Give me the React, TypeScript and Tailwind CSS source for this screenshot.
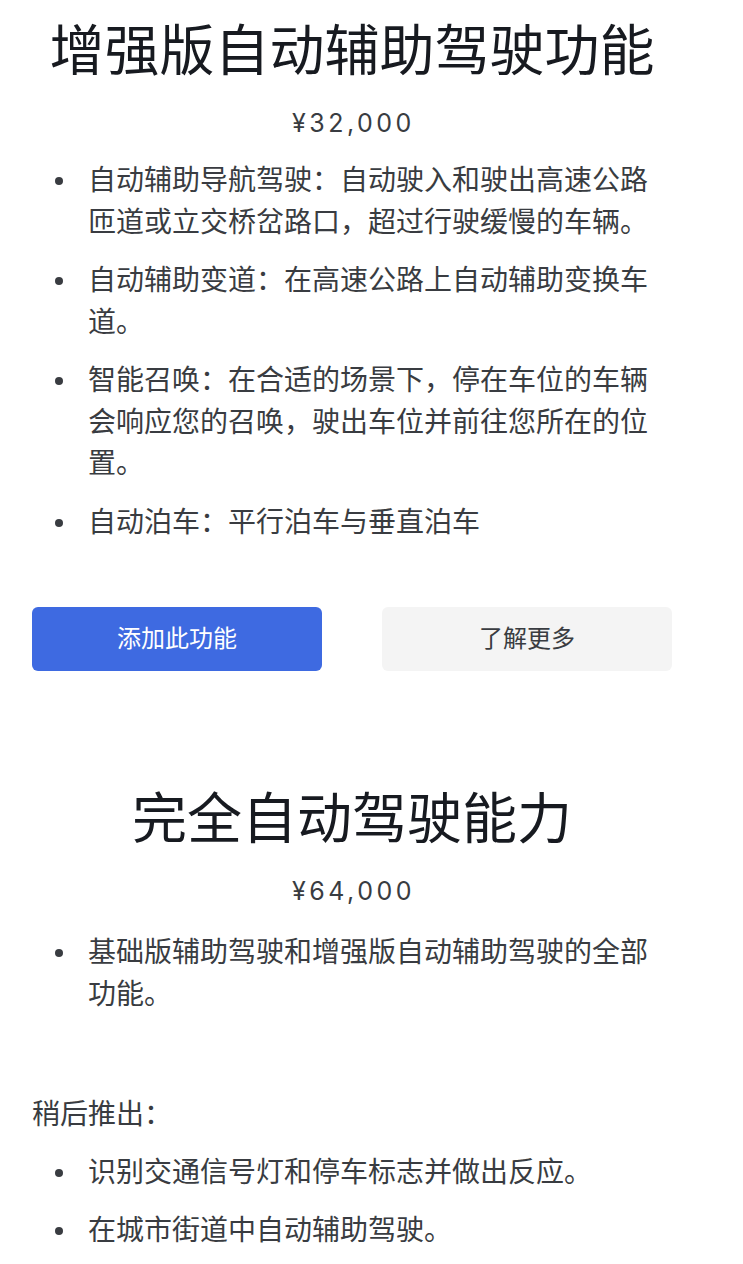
// Autopilot upgrade cards: enhanced autopilot and full self-driving
import React from 'react';

const FONT = { fontFamily: '"Inter", "Noto Sans CJK SC", sans-serif' };

interface Upgrade {
	title: string;
	price: string;
	features: string[];
}

const ENHANCED: Upgrade = {
	title: '增强版自动辅助驾驶功能',
	price: '¥32,000',
	features: [
		'自动辅助导航驾驶：自动驶入和驶出高速公路匝道或立交桥岔路口，超过行驶缓慢的车辆。',
		'自动辅助变道：在高速公路上自动辅助变换车道。',
		'智能召唤：在合适的场景下，停在车位的车辆会响应您的召唤，驶出车位并前往您所在的位置。',
		'自动泊车：平行泊车与垂直泊车',
	],
};

const FSD: Upgrade = {
	title: '完全自动驾驶能力',
	price: '¥64,000',
	features: ['基础版辅助驾驶和增强版自动辅助驾驶的全部功能。'],
};

const COMING_SOON = ['识别交通信号灯和停车标志并做出反应。', '在城市街道中自动辅助驾驶。'];

function FeatureList({ items }: { items: string[] }) {
	return (
		<ul className="flex flex-col gap-[17px]">
			{items.map((item) => (
				<li key={item} className="flex text-[28px] leading-[41.5px] text-[#393c41]">
					<span className="w-[56px] shrink-0 flex justify-center pt-[17px] pr-[2px]">
						<span className="block w-[8px] h-[8px] rounded-full bg-[#393c41]" />
					</span>
					<span className="flex-1">{item}</span>
				</li>
			))}
		</ul>
	);
}

function UpgradeHeader({ upgrade }: { upgrade: Upgrade }) {
	return (
		<div className="flex flex-col items-center">
			<h2 className="text-[55px] leading-[66px] text-[#171a20] font-normal">{upgrade.title}</h2>
			<p className="mt-[25px] text-[25px] leading-[30px] tracking-[3.5px] pl-[3px] text-[#393c41]">
				{upgrade.price}
			</p>
		</div>
	);
}

export default function App(): React.ReactElement {
	return (
		<div style={FONT} className="bg-white w-[743px] min-h-[1264px] pl-[32px] pr-[71px] pt-[17px]">
			<UpgradeHeader upgrade={ENHANCED} />
			<div className="mt-[22px]">
				<FeatureList items={ENHANCED.features} />
			</div>

			<div className="mt-[64px] flex justify-between">
				<button
					type="button"
					className="w-[290px] h-[64px] rounded-[6px] bg-[#3e6ae1] text-white text-[24px]"
				>
					添加此功能
				</button>
				<button
					type="button"
					className="w-[290px] h-[64px] rounded-[6px] bg-[#f4f4f4] text-[#393c41] text-[24px]"
				>
					了解更多
				</button>
			</div>

			<div className="mt-[114px]">
				<UpgradeHeader upgrade={FSD} />
			</div>
			<div className="mt-[26px]">
				<FeatureList items={FSD.features} />
			</div>

			<p className="mt-[79px] text-[28px] leading-[41.5px] text-[#393c41]">稍后推出：</p>
			<div className="mt-[16px]">
				<FeatureList items={COMING_SOON} />
			</div>
		</div>
	);
}
